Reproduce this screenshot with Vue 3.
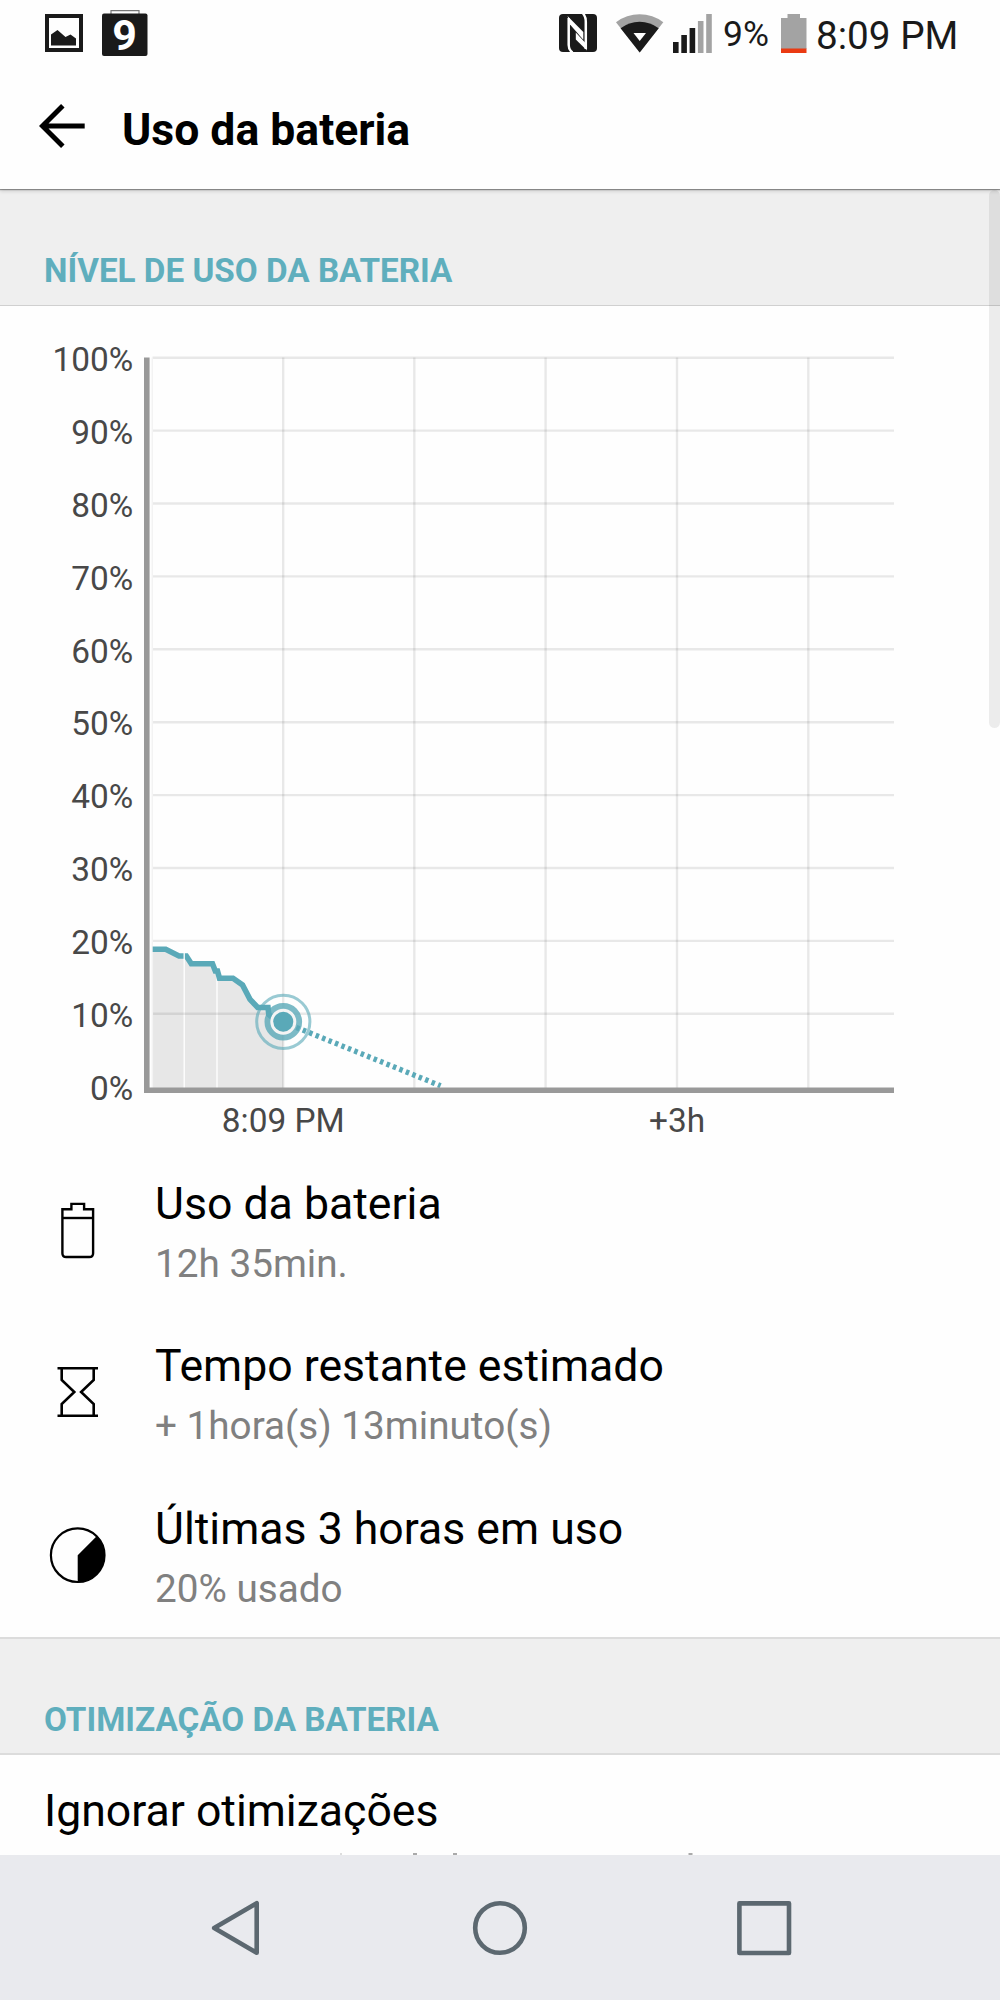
<template>
  <div class="screen">
    <header class="statusBar">
      <svg class="picture" width="38" height="38" viewBox="0 0 38 38">
        <rect x="2" y="2" width="34" height="34" fill="none" stroke="#1a1a1a" stroke-width="4" />
        <path d="M6 31.5V20.5L12.5 16L20.5 23L25.5 20.5L31 24.5V31.5Z" fill="#1a1a1a" />
      </svg>
      <svg class="calendar" width="46" height="56" viewBox="0 -5 46 56">
        <path d="M9 4V.7H37V4" fill="none" stroke="#777" stroke-width="1.2" />
        <rect y="3.5" width="45.5" height="42.5" rx="2" fill="#1a1a1a" />
        <text class="calendarDay" x="22.6" y="39.7">9</text>
      </svg>

      <div class="spacer"></div>

      <svg class="nfc" width="38" height="38" viewBox="0 0 38 38">
        <rect width="38" height="38" rx="4" fill="#1a1a1a" />
        <path d="M13.5 38.5C10.8 36.5 9.7 34.5 9.7 31V4" fill="none" stroke="#fff" stroke-width="2.5" />
        <path d="M24 -.5C26.4 2 26.8 4 26.8 8V35" fill="none" stroke="#fff" stroke-width="2.5" />
        <path d="M8.5 2L24.3 18V25.8L11 10.5Z" fill="#fff" />
        <path d="M28 36.5L16.8 25.5V18.5L26.5 29Z" fill="#fff" />
      </svg>
      <svg class="wifi" width="48" height="40" viewBox="0 0 48 40">
        <path d="M0 9.3A39 39 0 0 1 47.3 9.3L23.7 39.5Z" fill="#a3a3a3" />
        <path d="M4.6 15.2A31 31 0 0 1 42.7 15.2L23.7 39.5Z" fill="#1a1a1a" />
        <path d="M17.5 20H30L23.7 28Z" fill="#fff" />
      </svg>
      <svg class="signal" width="39" height="39" viewBox="0 0 39 39">
        <rect
          v-for="(h, i) in signalBars"
          :key="i"
          :x="i * 8.3"
          :y="39 - h"
          width="5.6"
          :height="h"
          :fill="i < 3 ? '#1a1a1a' : '#a3a3a3'"
        />
      </svg>
      <span class="percent">9%</span>
      <svg class="battery" width="26" height="39" viewBox="0 0 26 39">
        <path d="M0 4H6.5V0H19V4H25.5V35H0Z" fill="#a3a3a3" />
        <rect y="34.5" width="25.5" height="4.5" fill="#ea3a12" />
      </svg>
      <span class="clock">8:09 PM</span>
    </header>

    <div class="appBar">
      <button class="back" aria-label="Voltar">
        <svg width="46" height="44" viewBox="0 0 46 44">
          <path d="M23.8 1.8L3.5 22L23.8 42.2M3.5 22H45.7" fill="none" stroke="#000" stroke-width="5" />
        </svg>
      </button>
      <h1 class="title">Uso da bateria</h1>
    </div>

    <main class="content">
      <div class="scrollbar"></div>

      <h2 class="section first">NÍVEL DE USO DA BATERIA</h2>

      <svg class="chart" width="1000" height="844" viewBox="0 306 1000 844">
        <path :d="areaPath" fill="#000" fill-opacity=".09" />
        <path d="M184.2 958V1088M217 974V1088" stroke="#fff" stroke-width="1.3" />

        <g stroke="#000" stroke-opacity=".085" stroke-width="2.4">
          <line v-for="l in levels" :key="l" x1="152.5" x2="894" :y1="levelY(l)" :y2="levelY(l)" />
          <line v-for="x in hours" :key="x" :x1="x" :x2="x" y1="357.5" y2="1088" />
        </g>
        <line x1="152.3" x2="152.3" y1="357.5" y2="1088" stroke="#f3f3f3" stroke-width="1.5" />

        <path :d="curvePath" fill="none" stroke="#5aa9b8" stroke-width="5.6" />
        <path d="M184.2 950V960" stroke="#fff" stroke-width="1.3" />
        <path
          d="M296.3 1027.4L440.6 1085.8"
          stroke="#5aa9b8"
          stroke-width="5.4"
          stroke-dasharray="3.5 3.45"
        />

        <!-- niveau actuel -->
        <circle cx="283.3" cy="1021.8" r="11.5" fill="none" stroke="#f4f4f4" stroke-width="3.5" />
        <circle cx="283.3" cy="1021.8" r="15.9" fill="none" stroke="#5aa9b8" stroke-opacity=".8" stroke-width="5.8" />
        <circle cx="283.3" cy="1021.8" r="26.6" fill="none" stroke="#5aa9b8" stroke-opacity=".62" stroke-width="3" />
        <circle cx="283.3" cy="1021.8" r="10" fill="#5aa9b8" />

        <path d="M146.8 357.5V1090.2H894" fill="none" stroke="#999" stroke-width="5.6" />

        <g class="labels">
          <text v-for="l in [...levels, 0]" :key="l" x="133.2" :y="levelY(l) + 13.2" text-anchor="end">{{ l }}%</text>
          <text x="283.3" y="1132" text-anchor="middle">8:09 PM</text>
          <text x="677" y="1132" text-anchor="middle">+3h</text>
        </g>
      </svg>

      <div v-for="row in rows" :key="row.title" class="row">
        <svg class="rowIcon" width="60" height="60" viewBox="0 0 60 60">
          <g v-if="row.icon === 'battery'" fill="none" stroke="#000" stroke-width="2.4">
            <path d="M14.4 8.2H23.4V2.9H36.1V8.2H45.1V52.2Q45.1 56 41.3 56H18.2Q14.4 56 14.4 52.2Z" />
            <path d="M14.4 17H45.1" />
          </g>
          <g v-else-if="row.icon === 'hourglass'" fill="none" stroke="#000" stroke-width="2.6">
            <path d="M9.5 5.3H50M9.5 52.7H50" />
            <path d="M13.7 5.3V17L26.3 29L13.7 41V52.7M45.7 5.3V17L33.1 29L45.7 41V52.7" />
          </g>
          <g v-else>
            <circle cx="29.7" cy="29.2" r="26.8" fill="none" stroke="#000" stroke-width="2.2" />
            <path d="M29.7 29.2L48.9 10A27.2 27.2 0 0 1 29.7 56.4Z" />
          </g>
        </svg>
        <div class="rowBody">
          <div class="rowTitle">{{ row.title }}</div>
          <div class="rowText">{{ row.text }}</div>
        </div>
      </div>

      <h2 class="section second">OTIMIZAÇÃO DA BATERIA</h2>

      <div class="option">
        <div class="rowTitle">Ignorar otimizações</div>
        <svg class="cutLine" width="700" height="2" viewBox="0 0 700 2">
          <path d="M369 1H373M409 1H413M644.5 1H648.5" stroke="#aaa" stroke-width="2" />
          <path d="M296 1H298" stroke="#ddd" stroke-width="2" />
        </svg>
      </div>
    </main>

    <nav class="navBar">
      <svg viewBox="0 0 60 60" width="60" height="60">
        <path d="M50.7 5.2V54.8L8.2 30Z" />
      </svg>
      <svg viewBox="0 0 60 60" width="60" height="60">
        <circle cx="30" cy="30" r="24.8" />
      </svg>
      <svg viewBox="0 0 60 60" width="60" height="60">
        <rect x="5.4" y="5.4" width="49.6" height="49.6" />
      </svg>
    </nav>
  </div>
</template>

<script setup>
const signalBars = [11, 18, 25, 32, 39];

const levels = [100, 90, 80, 70, 60, 50, 40, 30, 20, 10];
const hours = [283.2, 414.3, 545.6, 677, 808.3];

const points = [
  [152.7, 949.3], [165.7, 949.3], [179, 956], [186.3, 956], [191.3, 963.8],
  [212.5, 963.8], [215.3, 971], [217.5, 971], [219.5, 978.3], [233, 978.3],
  [242.5, 985], [250, 999.3], [257.7, 1007.5], [268, 1007.5], [268.8, 1014.5],
  [276.5, 1021], [283.3, 1021.8],
];

const curvePath = "M" + points.map((p) => p.join(" ")).join("L");
const areaPath = `${curvePath}V1088H152.7Z`;

const rows = [
  { icon: "battery", title: "Uso da bateria", text: "12h 35min." },
  { icon: "hourglass", title: "Tempo restante estimado", text: "+ 1hora(s) 13minuto(s)" },
  { icon: "pie", title: "Últimas 3 horas em uso", text: "20% usado" },
];

function levelY(level) {
  return 1086.7 - level * 7.29;
}
</script>

<style>
body{
  background: #fff;
}
</style>

<style scoped>
.screen{
  width: 1000px;
  height: 2000px;
  display: flex;
  flex-direction: column;
  overflow: hidden;
  background: #fefefe;
  color: #000;
  font-family: Roboto, "Liberation Sans", sans-serif;
}
svg{ display: block; flex: none; }

.statusBar{
  flex: none;
  position: relative;
  z-index: 2;
  height: 66px;
  display: flex;
  align-items: center;
  padding: 0 43px 0 45px;
  background: #fefefe;
  color: #1a1a1a;
}
.spacer{ flex: 1; }
.calendar{ margin-left: 19px; }
.calendarDay{
  font-size: 43px;
  font-weight: 700;
  fill: #fff;
  text-anchor: middle;
}
.wifi{ margin-left: 19px; }
.signal{ margin-left: 9px; }
.percent{
  width: 46px;
  margin-left: 11px;
  padding-top: 2px;
  font-size: 35.5px;
  white-space: nowrap;
}
.battery{ margin-left: 12px; }
.clock{
  width: 141px;
  margin-left: 9px;
  padding-top: 4px;
  font-size: 38.7px;
  white-space: nowrap;
}

.appBar{
  flex: none;
  position: relative;
  z-index: 1;
  height: 123px;
  display: flex;
  align-items: center;
  padding-left: 39px;
  background: #fefefe;
  box-shadow: 0 1px 1px rgba(0,0,0,.36), 0 2px 4px rgba(0,0,0,.16);
}
.back{
  padding: 0 0 3px;
  border: 0;
  background: none;
}
.title{
  margin: 0 0 0 37px;
  padding-top: 4px;
  font-size: 44.5px;
  font-weight: 700;
}

.content{
  position: relative;
  flex: 1;
  min-height: 0;
  overflow: hidden;
}
.scrollbar{
  position: absolute;
  top: 1px;
  right: 0;
  width: 11px;
  height: 538px;
  border-radius: 6px;
  background: rgba(0,0,0,.07);
}

.section{
  margin: 0;
  padding-left: 44px;
  background: #efefef;
  color: #5faebd;
  font-size: 33.25px;
  font-weight: 700;
  line-height: 40px;
}
.first{
  padding-top: 62px;
  padding-bottom: 14px;
  border-bottom: 1px solid #d0d0d0;
}
.second{
  padding-top: 61px;
  padding-bottom: 13px;
  border-top: 2px solid #dcdcdc;
  border-bottom: 2px solid #dcdcdc;
}

.labels{
  font-size: 33.4px;
  fill: #484848;
}

.row{
  height: 162.33px;
  display: flex;
  align-items: center;
  gap: 47px;
  padding-left: 48px;
}
.rowBody{ padding-top: 3px; }
.rowTitle{
  font-size: 44.6px;
  line-height: 52px;
}
.rowText{
  margin-top: 11px;
  font-size: 38.7px;
  line-height: 46px;
  color: #808080;
}

.option{
  padding: 30px 44px 0;
}
/* haut de la ligne suivante, coupée par la barre de navigation */
.cutLine{ margin-top: 16px; }

.navBar{
  flex: none;
  height: 145px;
  display: flex;
  justify-content: center;
  align-items: center;
  gap: 204px;
  background: #e9eaee;
}
.navBar svg{
  fill: none;
  stroke: #5c6870;
  stroke-width: 4.6;
  stroke-linejoin: round;
}
</style>
